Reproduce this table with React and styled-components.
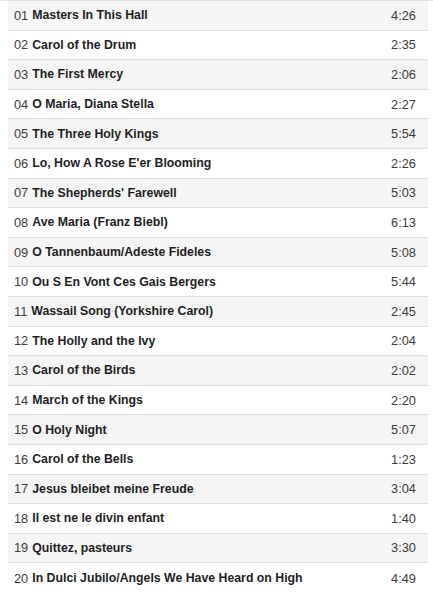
import React from 'react';
import styled, { createGlobalStyle } from 'styled-components';

const Global = createGlobalStyle`
  html, body {
    margin: 0;
    padding: 0;
    background: #ffffff;
  }
  body {
    font-family: "Liberation Sans", Arial, sans-serif;
  }
`;

const List = styled.div`
  width: 433px;
  box-sizing: border-box;
  padding: 0 5px 0 8px;
  border-top: 1px solid #e2e2e2;
`;

const Row = styled.div`
  display: flex;
  align-items: center;
  height: 29.6px;
  box-sizing: border-box;
  padding: 0 12px 0 6px;
  background: ${p => (p.$odd ? '#f5f5f5' : '#ffffff')};
  border-bottom: ${p => (p.$last ? 'none' : '1px solid #dedede')};
  font-size: 12.3px;
`;

const Num = styled.span`
  color: #3c3c3c;
  margin-right: 4px;
  font-size: 12.8px;
`;

const Title = styled.span`
  flex: 1;
  color: #1e1e1e;
  font-weight: bold;
  white-space: nowrap;
`;

const Time = styled.span`
  color: #3c3c3c;
  font-size: 12.8px;
`;

const tracks = [
  ['Masters In This Hall', '4:26'],
  ['Carol of the Drum', '2:35'],
  ['The First Mercy', '2:06'],
  ['O Maria, Diana Stella', '2:27'],
  ['The Three Holy Kings', '5:54'],
  ["Lo, How A Rose E'er Blooming", '2:26'],
  ["The Shepherds' Farewell", '5:03'],
  ['Ave Maria (Franz Biebl)', '6:13'],
  ['O Tannenbaum/Adeste Fideles', '5:08'],
  ['Ou S En Vont Ces Gais Bergers', '5:44'],
  ['Wassail Song (Yorkshire Carol)', '2:45'],
  ['The Holly and the Ivy', '2:04'],
  ['Carol of the Birds', '2:02'],
  ['March of the Kings', '2:20'],
  ['O Holy Night', '5:07'],
  ['Carol of the Bells', '1:23'],
  ['Jesus bleibet meine Freude', '3:04'],
  ['Il est ne le divin enfant', '1:40'],
  ['Quittez, pasteurs', '3:30'],
  ['In Dulci Jubilo/Angels We Have Heard on High', '4:49']
];

export default function App() {
  return (
    <>
      <Global />
      <List>
        {tracks.map(([title, time], i) => (
          <Row key={i} $odd={i % 2 === 0} $last={i === tracks.length - 1}>
            <Num>{String(i + 1).padStart(2, '0')}</Num>
            <Title>{title}</Title>
            <Time>{time}</Time>
          </Row>
        ))}
      </List>
    </>
  );
}
